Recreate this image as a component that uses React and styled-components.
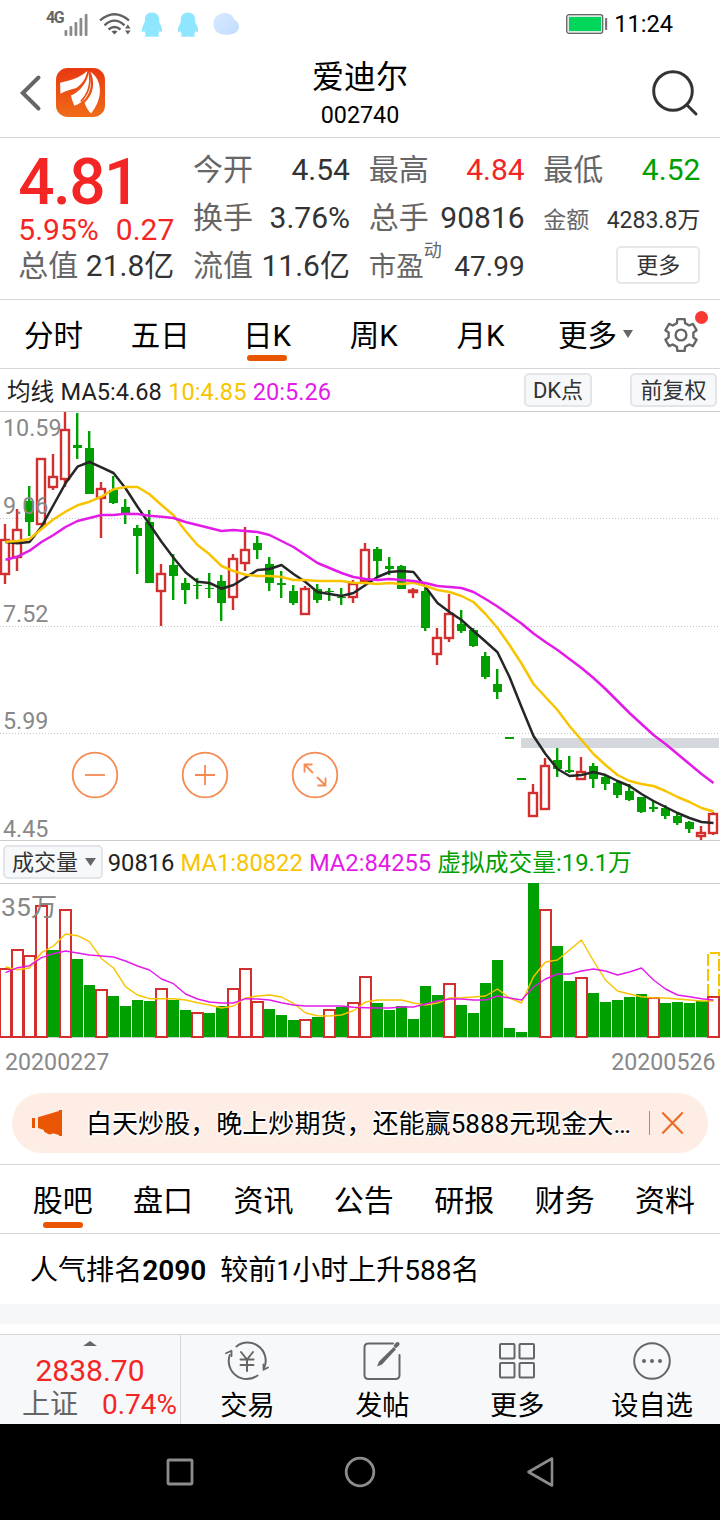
import React from 'react';
import styled, { createGlobalStyle } from 'styled-components';

const GlobalStyle = createGlobalStyle`
  * { box-sizing: border-box; }
  body {
    margin: 0;
    background: #fff;
    color: #000;
    font-family: Roboto, "Noto Sans CJK SC", sans-serif;
  }
  svg { display: block; flex: none; overflow: visible; }
`;

const RED = '#f42525';
const GREEN = '#00a000';
const ORANGE = '#ea5504';
const YELLOW = '#f8c400';
const PINK = '#e31be8';
const LINE = '#d4d6da';
const GREY = '#666';
const INK = '#333';

/* ---------- data ---------- */

// [type, bodyTop, bodyBottom, high, low]
const candles = [
  ['r', 540, 574, 524, 584], ['r', 530, 557, 509, 571], ['g', 501, 522, 486, 536], ['r', 459, 524, 459, 524],
  ['r', 477, 487, 454, 490], ['r', 430, 479, 412, 487], ['g', 445, 448, 413, 459], ['g', 448, 494, 431, 494],
  ['r', 489, 498, 482, 538], ['g', 490, 503, 476, 504], ['g', 507, 514, 499, 524], ['g', 528, 536, 525, 574],
  ['g', 522, 583, 510, 583], ['r', 574, 591, 564, 626], ['g', 565, 576, 554, 600], ['g', 583, 590, 578, 604],
  ['g', 585, 586, 578, 599], ['g', 588, 589, 573, 598], ['g', 581, 603, 575, 621], ['r', 559, 597, 554, 610],
  ['r', 550, 563, 527, 571], ['g', 543, 550, 536, 559], ['g', 564, 583, 557, 591], ['g', 583, 585, 571, 598],
  ['g', 591, 603, 585, 605], ['r', 589, 614, 586, 614], ['g', 589, 600, 584, 603], ['g', 591, 592, 588, 601],
  ['g', 597, 598, 588, 605], ['r', 584, 597, 580, 603], ['r', 550, 581, 543, 581], ['g', 549, 561, 547, 577],
  ['g', 566, 569, 557, 575], ['g', 566, 589, 565, 589], ['r', 590.5, 592, 588, 598], ['g', 591, 628, 588, 631],
  ['r', 638, 654, 628, 665], ['r', 614, 638, 594, 642], ['g', 624, 631, 610, 633], ['g', 630, 646, 628, 647],
  ['g', 656, 677, 652, 679], ['g', 684, 692, 669, 699], ['g', 737, 739, 737, 739], ['g', 778, 780, 778, 780],
  ['r', 793, 816, 784, 816], ['r', 766, 809, 758, 809], ['g', 760, 769, 748, 777], ['g', 770, 772, 756, 773],
  ['r', 772, 779, 757, 779], ['g', 766, 779, 763, 788], ['g', 777, 784, 775, 790], ['g', 783, 795, 780, 798],
  ['g', 791, 800, 784, 801], ['g', 797, 812, 797, 813], ['g', 807, 809, 801, 812], ['g', 808, 816, 805, 819],
  ['g', 816, 823, 813, 825], ['g', 822, 829, 821, 833], ['r', 833, 836, 826, 840], ['r', 814, 833, 812, 835],
];

const ma5 = [542, 543.3, 542, 526.7, 505, 483.3, 466.7, 462, 467.3, 473, 488.3, 506.7, 524.3, 541.7, 557.7, 572.3, 581.7, 583, 588.7, 585, 577.5, 570, 569, 565, 574, 582, 592, 594, 596, 593, 585, 577, 572, 571, 572, 587, 603, 612, 620, 631, 641.5, 652.3, 677, 707, 736, 754, 769, 776, 775, 772, 775, 781, 786, 794, 801, 807, 813, 818, 822, 823];
const ma10 = [541.7, 541, 539, 529, 519.3, 511.7, 505.3, 501.7, 496.7, 489.3, 487, 487, 494.3, 505, 515.3, 531, 545, 554.3, 566, 571, 574.7, 576, 576, 577, 580, 580, 581, 581, 581, 582.7, 583, 584, 583, 584, 582.7, 586, 590, 592, 596, 602, 614, 628, 645, 663.5, 684, 697, 710, 726, 740, 754, 765, 775, 781, 784, 786, 791, 797, 802, 808, 811.5];
const ma20 = [559.7, 556.7, 550.7, 542, 535, 527, 521, 518, 515, 515, 513.7, 514, 515.7, 516.7, 518, 522, 525, 528, 531, 530, 531, 532, 535, 541, 547, 555, 563, 568, 573, 577, 579, 580, 579, 580, 581, 583, 586, 587, 588, 592, 599, 606.5, 615, 623.5, 633.5, 642, 650, 659, 668, 678, 689, 701, 713, 724, 735, 744, 754, 764, 774, 783];

const volumeTops = [968, 949, 955, 905, 950, 909, 959, 985, 989, 996, 1006, 1000, 1001, 988, 1000, 1010, 1012, 1013, 1006, 988, 968, 1001, 1009, 1015, 1020, 1019, 1017, 1009, 1007, 1002, 976, 1003, 1010, 1006, 1019, 986, 995, 983, 1005, 1013, 983, 960, 1028, 1032, 883, 909, 946, 981, 977, 993, 1002, 1000, 997, 994, 997, 1003, 1002, 1003, 1001, 996];
const hollowVolumes = new Set([0, 1, 2, 3, 5, 8, 13, 16, 19, 20, 21, 25, 27, 29, 30, 37, 45, 48, 54, 59]);
const vma1 = [967, 969.7, 968, 952.7, 946, 934, 935.7, 941.7, 958.7, 968, 986.7, 995, 998.7, 998.7, 998.7, 1000, 1002.7, 1005, 1008, 1006, 998, 996, 995, 997, 1003.3, 1013, 1015.7, 1016, 1015, 1010.7, 1002, 1000, 1000, 1000, 1003, 1005, 1003, 998, 997.7, 997, 996, 989, 998, 1003, 976.7, 962, 960, 950, 940, 961, 980, 991, 994, 996.7, 997.7, 998, 999, 1000, 1001, 1001];
const vma2 = [972.7, 967.7, 965.7, 957.7, 953.7, 951, 953, 955, 956, 957, 961, 966, 970, 979, 983.7, 994, 999, 1002, 1003, 1003, 998.7, 999, 1000, 1002.7, 1005, 1006, 1006, 1006, 1006, 1007.3, 1007.7, 1008, 1008, 1007, 1007, 1004, 1001, 999, 999, 1000, 1000, 996, 998, 1000, 987, 979, 974, 974, 971, 969, 971, 975, 972, 968, 980, 989, 995, 996.7, 998.7, 1000];

const toPoints = (ys) => ys.map((y, i) => `${5.5 + i * 12},${y}`).join(' ');

/* ---------- layout parts ---------- */

const Screen = styled.main`
  width: 720px;
  height: 1520px;
  display: flex;
  flex-direction: column;
  background: #fff;
  overflow: hidden;
  white-space: nowrap;
`;

const StatusBar = styled.header`
  height: 48px;
  flex: none;
  display: flex;
  justify-content: space-between;
  padding: 0 47px 0 46px;
`;

const StatusGroup = styled.div`
  display: flex;
  align-items: center;
  gap: ${(p) => p.$gap}px;
`;

const Network = styled.div`
  display: flex;
  align-items: flex-start;
  height: 26px;
`;

const NetworkType = styled.span`
  font-size: 16px;
  font-weight: 700;
  line-height: 14px;
  width: 18px;
  color: #666;
  letter-spacing: -1.4px;
`;

const Clock = styled.span`
  font-size: 23.6px;
  line-height: 49px;
`;

const TitleBar = styled.div`
  height: 90px;
  flex: none;
  display: grid;
  grid-template-columns: 120px 1fr 120px;
  border-bottom: 1px solid ${LINE};
`;

const TitleLeft = styled.div`
  display: flex;
  align-items: center;
  gap: 14px;
  padding-left: 19px;
`;

const TitleRight = styled.div`
  display: flex;
  align-items: center;
  justify-content: flex-end;
  padding-right: 21px;
`;

const Title = styled.div`
  text-align: center;
  padding-top: 7px;
`;

const StockName = styled.div`
  font-size: 32px;
  line-height: 44px;
`;

const StockCode = styled.div`
  font-size: 23.3px;
  line-height: 32px;
`;

const Quote = styled.section`
  height: 162px;
  flex: none;
  display: grid;
  grid-template-columns: 156px 157px 156px 157px;
  column-gap: 18.7px;
  padding: 8px 0 0 18.3px;
  border-bottom: 1px solid ${LINE};
`;

const QuoteColumn = styled.div`
  display: flex;
  flex-direction: column;
`;

const QuoteRow = styled.div`
  height: 48px;
  display: flex;
  align-items: center;
  justify-content: space-between;
  font-size: ${(p) => p.$size || 30}px;
  line-height: 48px;
  color: ${(p) => p.$color || INK};
  padding-top: ${(p) => p.$top || 0}px;
`;

const Label = styled.span`
  color: ${GREY};
  font-size: ${(p) => p.$size || 'inherit'};
`;

const Sup = styled.sup`
  font-size: 18px;
  line-height: 0;
  vertical-align: 19px;
`;

const Price = styled.div`
  height: 71px;
  font-size: 64px;
  line-height: 74px;
  font-weight: 500;
  letter-spacing: -1.6px;
  color: ${RED};
`;

const Change = styled.div`
  height: 25px;
  display: flex;
  align-items: center;
  justify-content: space-between;
  font-size: 30px;
  line-height: 25px;
  color: ${RED};
`;

const MoreButton = styled.button`
  align-self: flex-end;
  width: 84px;
  height: 38px;
  margin-top: 4px;
  padding: 1px 0 0;
  border: 2px solid #e6e7eb;
  border-radius: 5px;
  background: #fff;
  color: ${INK};
  font: 22px/34px Roboto, "Noto Sans CJK SC", sans-serif;
`;

const PeriodTabs = styled.nav`
  height: 69px;
  flex: none;
  display: flex;
  border-bottom: 1px solid ${LINE};
`;

const Tab = styled.a`
  position: relative;
  width: ${(p) => p.$width}px;
  text-align: center;
  font-size: ${(p) => p.$size || 29.5}px;
  line-height: ${(p) => p.$line || 73}px;
`;

const Underline = styled.i`
  position: absolute;
  left: calc(50% - 20px);
  bottom: ${(p) => p.$bottom}px;
  width: 40px;
  height: 6px;
  border-radius: 3px;
  background: ${ORANGE};
`;

const MorePeriods = styled.a`
  display: flex;
  align-items: flex-start;
  gap: 6px;
  padding-left: 24px;
  width: 129px;
  height: 68px;
  font-size: 29.5px;
  line-height: 73px;

  svg { margin-top: 30px; }
`;

const SettingsButton = styled.div`
  position: relative;
  padding-top: 17px;
`;

const Badge = styled.i`
  position: absolute;
  left: 32px;
  top: 11px;
  width: 13px;
  height: 13px;
  border-radius: 50%;
  background: #f93832;
`;

const IndicatorBar = styled.div`
  height: 43px;
  flex: none;
  display: flex;
  align-items: center;
  padding: 0 3px 0 ${(p) => p.$left}px;
  font-size: ${(p) => p.$size}px;
  border-bottom: 1px solid #ccc;
  color: ${INK};
`;

const Values = styled.div`
  flex: 1;
  display: flex;
  gap: ${(p) => p.$gap}px;
  line-height: 40px;
  padding-top: ${(p) => p.$top}px;
`;

const Value = styled.span`
  color: ${(p) => p.$color || '#222'};
`;

const ChipButton = styled.button`
  height: 34px;
  width: ${(p) => p.$width}px;
  margin-left: ${(p) => p.$left || 0}px;
  margin-right: ${(p) => p.$right || 0}px;
  padding: 2px 0 0 ${(p) => p.$inset || 0}px;
  display: flex;
  align-items: center;
  justify-content: center;
  gap: 7px;
  border: 2px solid #e3e5ea;
  border-radius: 5px;
  background: #f6f8fa;
  color: ${INK};
  font: 22px/28px Roboto, "Noto Sans CJK SC", sans-serif;

  svg { margin-top: -2px; }
`;

const ChartArea = styled.section`
  position: relative;
  height: ${(p) => p.$height}px;
  flex: none;
`;

const ChartControls = styled.div`
  position: absolute;
  left: 71px;
  top: 339px;
  display: flex;
  gap: 62px;
`;

const AxisText = styled.text`
  font-size: ${(p) => p.$size || 23.3}px;
  fill: #888;
`;

const DateRow = styled.div`
  height: 55px;
  flex: none;
  display: flex;
  justify-content: space-between;
  padding: 0 4.5px 0 5px;
  font-size: 23.2px;
  line-height: 48px;
  color: #888;
`;

const Banner = styled.aside`
  margin: 0 12px 11px;
  height: 60px;
  flex: none;
  display: flex;
  align-items: center;
  padding: 0 24.5px 0 19px;
  border-radius: 30px;
  background: #fdede5;
`;

const BannerText = styled.span`
  flex: 1;
  margin-left: 23px;
  font-size: 26.05px;
  line-height: 62px;
  padding-top: 1px;
  text-shadow: -1px -1px 1px #fff, 1px -1px 1px #fff, -1px 1px 1px #fff, 1px 1px 1px #fff, 0 2px 1px #fff, 0 -2px 1px #fff;
`;

const BannerDivider = styled.i`
  width: 1px;
  height: 24px;
  margin-right: 10.5px;
  background: #e07a48;
`;

const SectionTabs = styled.nav`
  height: 70px;
  flex: none;
  display: flex;
  padding-left: 12.5px;
  border-top: 1px solid ${LINE};
  border-bottom: 1px solid ${LINE};
`;

const Ranking = styled.div`
  height: 70px;
  flex: none;
  padding-left: 30px;
  font-size: 28.05px;
  line-height: 73px;
`;

const RankNumber = styled.b`
  font-weight: 600;
  margin-right: 14px;
`;

const Spacer = styled.div`
  height: 20px;
  margin-bottom: 10px;
  flex: none;
  background: #f6f7f9;
`;

const BottomBar = styled.footer`
  height: 90px;
  flex: none;
  display: flex;
  border-top: 1px solid ${LINE};
  background: #f7f8fa;
`;

const IndexPanel = styled.div`
  width: 181px;
  border-right: 1px solid ${LINE};
  color: ${RED};
  display: flex;
  flex-direction: column;
  align-items: center;
  padding-top: 6px;
`;

const IndexValue = styled.div`
  font-size: 30px;
  line-height: 36px;
  padding-top: 7px;
`;

const IndexChange = styled.div`
  align-self: stretch;
  display: flex;
  justify-content: space-between;
  padding: 0 3px 0 22px;
  font-size: 28px;
  line-height: 32px;
`;

const Actions = styled.nav`
  flex: 1;
  display: grid;
  grid-template-columns: repeat(4, 134.9px);
  margin-left: -1px;
`;

const Action = styled.a`
  display: flex;
  flex-direction: column;
  align-items: center;
  padding-top: 5px;
  font-size: 27.2px;
  line-height: 49px;
  text-shadow: 0 0 2px #fff, 0 0 3px #fff;
`;

const SystemNav = styled.div`
  height: 96px;
  flex: none;
  display: flex;
  align-items: center;
  justify-content: center;
  gap: 140px;
  background: #000;
`;

/* ---------- icons ---------- */

const Signal = styled(({ className }) => (
  <svg className={className} width="26" height="26" viewBox="0 0 26 26" fill="#8a8a8a">
    <rect x="0.5" y="18" width="2.8" height="6" rx="1" />
    <rect x="5.5" y="14" width="2.8" height="10" rx="1" />
    <rect x="10.5" y="10" width="2.8" height="14" rx="1" />
    <rect x="15.5" y="6" width="2.8" height="18" rx="1" />
    <rect x="20.7" y="2" width="2.8" height="22" rx="1" />
  </svg>
))`
  margin-top: 1px;
`;

const Wifi = () => (
  <svg width="33" height="24" viewBox="0 0 33 24" fill="none" stroke="#606060" strokeWidth="2.3">
    <path d="M1 8.5Q15.5-4 30 8.5" />
    <path d="M5.5 13.3Q15.5 4 25.5 13.3" />
    <path d="M9.5 17.5Q15.5 12.5 21.5 17.5" />
    <path d="M12.5 19.5Q15.5 17.5 18.5 19.5L15.5 22.5Z" fill="#606060" stroke="none" />
    <path d="M26 16.5L28.8 12.5 31.6 16.5ZM26 18.5L28.8 22.5 31.6 18.5Z" fill="#606060" stroke="none" />
  </svg>
);

const Penguin = () => (
  <svg width="22" height="25" viewBox="0 0 22 25" fill="#8fe6ff">
    <path d="M11 0.5C15.8 0.5 18.1 3.6 18.1 7.5C18.1 9.5 18.4 10.8 19.3 12.6C20.9 15.4 21.5 18 20.9 20.6C20.1 20.6 19.5 19.6 18.9 18.6C18.5 20.4 17.7 21.3 16.9 22.2C18 22.8 18.6 23.6 17.8 24.4C15.6 25 12.6 24.9 11 24.2C9.4 24.9 6.4 25 4.2 24.4C3.4 23.6 4 22.8 5.1 22.2C4.3 21.3 3.5 20.4 3.1 18.6C2.5 19.6 1.9 20.6 1.1 20.6C0.5 18 1.1 15.4 2.7 12.6C3.6 10.8 3.9 9.5 3.9 7.5C3.9 3.6 6.2 0.5 11 0.5Z" />
  </svg>
);

const Cloud = () => (
  <svg width="27" height="24" viewBox="0 0 27 24">
    <defs>
      <linearGradient id="cloud" x1="0" y1="0" x2="1" y2="1">
        <stop offset="0" stopColor="#d9ebff" />
        <stop offset="1" stopColor="#bfdcff" />
      </linearGradient>
    </defs>
    <path d="M11.5 1C16.5 1 20 3.6 21.5 7.8C24.4 9 26 11.6 26 14.6C26 19 22.6 22 17 22.4C12 23 7 22.6 4 20C1.4 17.6 0.3 14.6 0.5 11.2C0.8 5.2 5.5 1 11.5 1Z" fill="url(#cloud)" />
  </svg>
);

const Battery = () => (
  <svg width="42" height="20" viewBox="0 0 42 20">
    <rect x="0.7" y="0.7" width="36" height="18.6" rx="2.2" fill="#dcebe2" stroke="#666" strokeWidth="1.3" />
    <rect x="3" y="3" width="32" height="14" fill="#00d75a" />
    <rect x="39" y="4" width="2.2" height="12" fill="#777" />
  </svg>
);

const Back = () => (
  <svg width="23" height="38" viewBox="0 0 23 38" fill="none" stroke="#666" strokeWidth="4" strokeLinecap="round" strokeLinejoin="miter">
    <path d="M19.5 3.5L3.8 19 19.5 34.5" />
  </svg>
);

const Logo = () => (
  <svg width="49" height="49" viewBox="0 0 144 144">
    <defs>
      <linearGradient id="logo" x1="0" y1="0" x2="0" y2="1">
        <stop offset="0" stopColor="#e83812" />
        <stop offset="1" stopColor="#f06c18" />
      </linearGradient>
    </defs>
    <rect width="144" height="144" rx="34" fill="url(#logo)" />
    <g fill="#fff">
      <path d="M92 9C70 28 45 37 12 43L13 76C28 67 46 62 60 59C78 47 89 28 92 9Z" />
      <path d="M96 14C92 42 70 70 44 81C46 92 50 102 54 111C66 106 78 98 86 90C106 66 106 38 96 14Z" />
      <path d="M101 11C115 40 112 76 84 102C88 115 95 126 103 134C118 115 130 90 129 64C128 40 118 22 101 11Z" />
    </g>
    <path d="M97 10C104 44 97 74 73 98" fill="none" stroke="#ec5216" strokeWidth="5" />
  </svg>
);

const Search = () => (
  <svg width="48" height="48" viewBox="0 0 48 48" fill="none" stroke="#333" strokeWidth="3" strokeLinecap="round">
    <circle cx="22" cy="22" r="19.3" />
    <path d="M36.5 36.5L45 45" />
  </svg>
);

const gearPath = (() => {
  const pts = [];
  for (let k = 0; k < 6; k += 1) {
    const mid = -90 + k * 60;
    [[-19, 12.6], [-13, 16.3], [13, 16.3], [19, 12.6]].forEach(([d, r]) => {
      const a = ((mid + d) * Math.PI) / 180;
      pts.push(`${(18 + r * Math.cos(a)).toFixed(2)} ${(18 + r * Math.sin(a)).toFixed(2)}`);
    });
  }
  return `M${pts.join('L')}Z`;
})();

const Gear = () => (
  <svg width="36" height="36" viewBox="0 0 36 36" fill="none" stroke="#666" strokeWidth="2.4" strokeLinejoin="round">
    <path d={gearPath} />
    <circle cx="18" cy="18" r="5.4" />
  </svg>
);

const Caret = ({ up, width = 10, height = 8 }) => (
  <svg width={width} height={height} viewBox="0 0 10 8" preserveAspectRatio="none" fill="#666">
    <path d={up ? 'M0 8H10L5 0Z' : 'M0 0H10L5 8Z'} />
  </svg>
);

const RoundControl = ({ children }) => (
  <svg width="48" height="48" viewBox="0 0 48 48" fill="none" stroke="#f58b53" strokeWidth="1.8">
    <circle cx="24" cy="24" r="22.3" />
    {children}
  </svg>
);

const Megaphone = () => (
  <svg width="32" height="28" viewBox="0 0 32 28" fill={ORANGE}>
    <rect x="1" y="9" width="3" height="10" />
    <path d="M7 8.2L28 2V1H31V27H28V26L22 24.2L20.5 25.2H17.5L13 22.5V21L7 19Z" />
  </svg>
);

const Close = () => (
  <svg width="23" height="24" viewBox="0 0 23 24" fill="none" stroke="#ee6c28" strokeWidth="2.2">
    <path d="M1.3 1.5L21.7 22.5M21.7 1.5L1.3 22.5" />
  </svg>
);

const ActionIcon = ({ children }) => (
  <svg width="44" height="42" viewBox="0 0 44 42" fill="none" stroke="#666" strokeWidth="2" strokeLinecap="round" strokeLinejoin="round">
    {children}
  </svg>
);

const icons = {
  trade: (
    <ActionIcon>
      <path d="M11.5 6.5A18 18 0 0 1 39.5 27" />
      <path d="M32.5 35.5A18 18 0 0 1 4.8 15" />
      <path d="M1 13.2L6.5 10.8V16M43 27.5L38.5 29.8V24.5" strokeWidth="1.8" />
      <path d="M16 12L22 19.5 28 12M22 19.5V31M15.5 19.5H28.5M15.5 25H28.5" />
    </ActionIcon>
  ),
  post: (
    <ActionIcon>
      <path d="M33 3.5H8.5Q4.5 3.5 4.5 7.5V35Q4.5 39 8.5 39H35.5Q39.5 39 39.5 35V15" />
      <path d="M33.8 7L19 21.5 17 26.5 22 24.5 36 9.2Z" fill="#666" stroke="none" />
      <path d="M35.8 5.8L37.6 4" strokeWidth="4" />
    </ActionIcon>
  ),
  more: (
    <ActionIcon>
      <g strokeLinejoin="miter">
        <rect x="5" y="4" width="14.5" height="14.5" rx="1" />
        <rect x="24.5" y="4" width="14.5" height="14.5" rx="1" />
        <rect x="5" y="23" width="14.5" height="14.5" rx="1" />
        <rect x="24.5" y="23" width="14.5" height="14.5" rx="1" />
      </g>
    </ActionIcon>
  ),
  watch: (
    <ActionIcon>
      <circle cx="22" cy="21" r="17.8" />
      <g fill="#666" stroke="none">
        <circle cx="14" cy="21" r="2" />
        <circle cx="22" cy="21" r="2" />
        <circle cx="30" cy="21" r="2" />
      </g>
    </ActionIcon>
  ),
};

/* ---------- charts ---------- */

const Candle = ({ index, data: [type, top, bottom, high, low] }) => {
  const x = index * 12;
  if (type === 'g') {
    return (
      <g fill={GREEN}>
        <rect x={x + 1} y={top} width="9" height={bottom - top} />
        {low - high > 2 && <rect x={x + 4} y={high} width="2.4" height={low - high} />}
      </g>
    );
  }
  return (
    <g fill="none" stroke="#d32f2f" strokeWidth="2.4">
      <path d={`M${x + 5} ${high}V${top}M${x + 5} ${bottom}V${low}`} />
      <rect x={x + 1} y={top} width="8" height={bottom - top} />
    </g>
  );
};

const PriceChart = () => (
  <svg width="720" height="429" viewBox="0 412 720 429">
    <g stroke="#c4c4c4" strokeWidth="1" strokeDasharray="1 2">
      <path d="M0 518.5H720M0 626.5H720M0 733.5H720" />
    </g>
    <path d="M0 840.5H720" stroke="#ccc" />
    <rect x="521" y="738" width="198" height="10" fill="#d4d7dc" />
    {candles.map((c, i) => <Candle key={i} index={i} data={c} />)}
    <g fill="none" strokeWidth="2.5" strokeLinejoin="round">
      <polyline points={toPoints(ma5)} stroke="#262626" />
      <polyline points={toPoints(ma10)} stroke={YELLOW} />
      <polyline points={toPoints(ma20)} stroke={PINK} />
    </g>
    <AxisText x="3" y="436">10.59</AxisText>
    <AxisText x="3" y="514">9.06</AxisText>
    <AxisText x="3" y="622">7.52</AxisText>
    <AxisText x="3" y="729">5.99</AxisText>
    <AxisText x="3" y="837">4.45</AxisText>
  </svg>
);

const VolumeChart = () => (
  <svg width="720" height="154" viewBox="0 884 720 154">
    <path d="M0 1037.5H720" stroke="#ccc" />
    {volumeTops.map((top, i) => (hollowVolumes.has(i) ? null : (
      <rect key={i} x={i * 12} y={top} width="11" height={1037 - top} fill={GREEN} />
    )))}
    {volumeTops.map((top, i) => (hollowVolumes.has(i) ? (
      <rect key={i} x={i * 12} y={top + 1} width="11" height={1036 - top} fill="#fff" stroke="#d32f2f" strokeWidth="2" />
    ) : null))}
    <path d="M708 996V953H719V996" fill="none" stroke={YELLOW} strokeWidth="2" strokeDasharray="12 3" />
    <g fill="none" strokeWidth="1.4" strokeLinejoin="round">
      <polyline points={toPoints(vma1)} stroke={YELLOW} />
      <polyline points={toPoints(vma2)} stroke={PINK} />
    </g>
    <AxisText x="1" y="916" $size={26.5}>35万</AxisText>
  </svg>
);

/* ---------- page ---------- */

const periods = ['分时', '五日', '日K', '周K', '月K'];
const sections = ['股吧', '盘口', '资讯', '公告', '研报', '财务', '资料'];
const actions = [['trade', '交易'], ['post', '发帖'], ['more', '更多'], ['watch', '设自选']];

export default function App() {
  return (
    <>
      <GlobalStyle />
      <Screen>
        <StatusBar>
          <StatusGroup $gap={9}>
            <Network>
              <NetworkType>4G</NetworkType>
              <Signal />
            </Network>
            <Wifi />
            <StatusGroup $gap={14}>
              <Penguin />
              <Penguin />
              <Cloud />
            </StatusGroup>
          </StatusGroup>
          <StatusGroup $gap={6}>
            <Battery />
            <Clock>11:24</Clock>
          </StatusGroup>
        </StatusBar>

        <TitleBar>
          <TitleLeft><Back /><Logo /></TitleLeft>
          <Title>
            <StockName>爱迪尔</StockName>
            <StockCode>002740</StockCode>
          </Title>
          <TitleRight><Search /></TitleRight>
        </TitleBar>

        <Quote>
          <QuoteColumn>
            <Price>4.81</Price>
            <Change><span>5.95%</span><span>0.27</span></Change>
            <QuoteRow><Label>总值</Label><span>21.8亿</span></QuoteRow>
          </QuoteColumn>
          <QuoteColumn>
            <QuoteRow><Label>今开</Label><span>4.54</span></QuoteRow>
            <QuoteRow><Label>换手</Label><span>3.76%</span></QuoteRow>
            <QuoteRow><Label>流值</Label><span>11.6亿</span></QuoteRow>
          </QuoteColumn>
          <QuoteColumn>
            <QuoteRow $color={RED}><Label>最高</Label><span>4.84</span></QuoteRow>
            <QuoteRow><Label>总手</Label><span>90816</span></QuoteRow>
            <QuoteRow $size={28} $top={1}><Label $size="27.5px">市盈<Sup>动</Sup></Label><span>47.99</span></QuoteRow>
          </QuoteColumn>
          <QuoteColumn>
            <QuoteRow $color={GREEN}><Label>最低</Label><span>4.52</span></QuoteRow>
            <QuoteRow $size={23} $top={5}><Label>金额</Label><span>4283.8万</span></QuoteRow>
            <MoreButton>更多</MoreButton>
          </QuoteColumn>
        </Quote>

        <PeriodTabs>
          {periods.map((name) => (
            <Tab key={name} $width={106.8}>
              {name}
              {name === '日K' && <Underline $bottom={7} />}
            </Tab>
          ))}
          <MorePeriods>更多<Caret /></MorePeriods>
          <SettingsButton><Gear /><Badge /></SettingsButton>
        </PeriodTabs>

        <IndicatorBar $left={7} $size={23.6}>
          <Values $top={3} $gap={6.4}>
            <Value>均线</Value>
            <Value>MA5:4.68</Value>
            <Value $color={YELLOW}>10:4.85</Value>
            <Value $color={PINK}>20:5.26</Value>
          </Values>
          <ChipButton $width={68}>DK点</ChipButton>
          <ChipButton $width={87} $left={38}>前复权</ChipButton>
        </IndicatorBar>

        <ChartArea $height={429}>
          <PriceChart />
          <ChartControls>
            <RoundControl><path d="M14 24H34" /></RoundControl>
            <RoundControl><path d="M14 24H34M24 14V34" /></RoundControl>
            <RoundControl>
              <path d="M22 22L13.5 13.5M13.5 21.5V13.5H21.5M26 26L34.5 34.5M34.5 26.5V34.5H26.5" />
            </RoundControl>
          </ChartControls>
        </ChartArea>

        <IndicatorBar $left={3} $size={23.75}>
          <ChipButton $width={100} $right={4.7} $inset={2}>成交量<Caret width={11} /></ChipButton>
          <Values $top={2} $gap={6.1}>
            <Value>90816</Value>
            <Value $color={YELLOW}>MA1:80822</Value>
            <Value $color={PINK}>MA2:84255</Value>
            <Value $color={GREEN}>虚拟成交量:19.1万</Value>
          </Values>
        </IndicatorBar>

        <ChartArea $height={154}>
          <VolumeChart />
        </ChartArea>

        <DateRow><span>20200227</span><span>20200526</span></DateRow>

        <Banner>
          <Megaphone />
          <BannerText>白天炒股，晚上炒期货，还能赢5888元现金大…</BannerText>
          <BannerDivider />
          <Close />
        </Banner>

        <SectionTabs>
          {sections.map((name, i) => (
            <Tab key={name} $width={100.4} $size={30} $line={72}>
              {name}
              {i === 0 && <Underline $bottom={5} />}
            </Tab>
          ))}
        </SectionTabs>

        <Ranking>人气排名<RankNumber>2090</RankNumber>较前1小时上升588名</Ranking>
        <Spacer />

        <BottomBar>
          <IndexPanel>
            <Caret up width={14} height={5} />
            <IndexValue>2838.70</IndexValue>
            <IndexChange><Label>上证</Label><span>0.74%</span></IndexChange>
          </IndexPanel>
          <Actions>
            {actions.map(([icon, name]) => (
              <Action key={icon}>
                {icons[icon]}
                {name}
              </Action>
            ))}
          </Actions>
        </BottomBar>

        <SystemNav>
          <svg width="40" height="40" viewBox="0 0 40 40" fill="none" stroke="#8c8c8c" strokeWidth="2.8">
            <rect x="8" y="8" width="24" height="24" rx="1" />
          </svg>
          <svg width="40" height="40" viewBox="0 0 40 40" fill="none" stroke="#8c8c8c" strokeWidth="2.8">
            <circle cx="20" cy="20" r="13.8" />
          </svg>
          <svg width="40" height="40" viewBox="0 0 40 40" fill="none" stroke="#8c8c8c" strokeWidth="2.6" strokeLinejoin="round">
            <path d="M32 6.5V33.5L8.5 20Z" />
          </svg>
        </SystemNav>
      </Screen>
    </>
  );
}
